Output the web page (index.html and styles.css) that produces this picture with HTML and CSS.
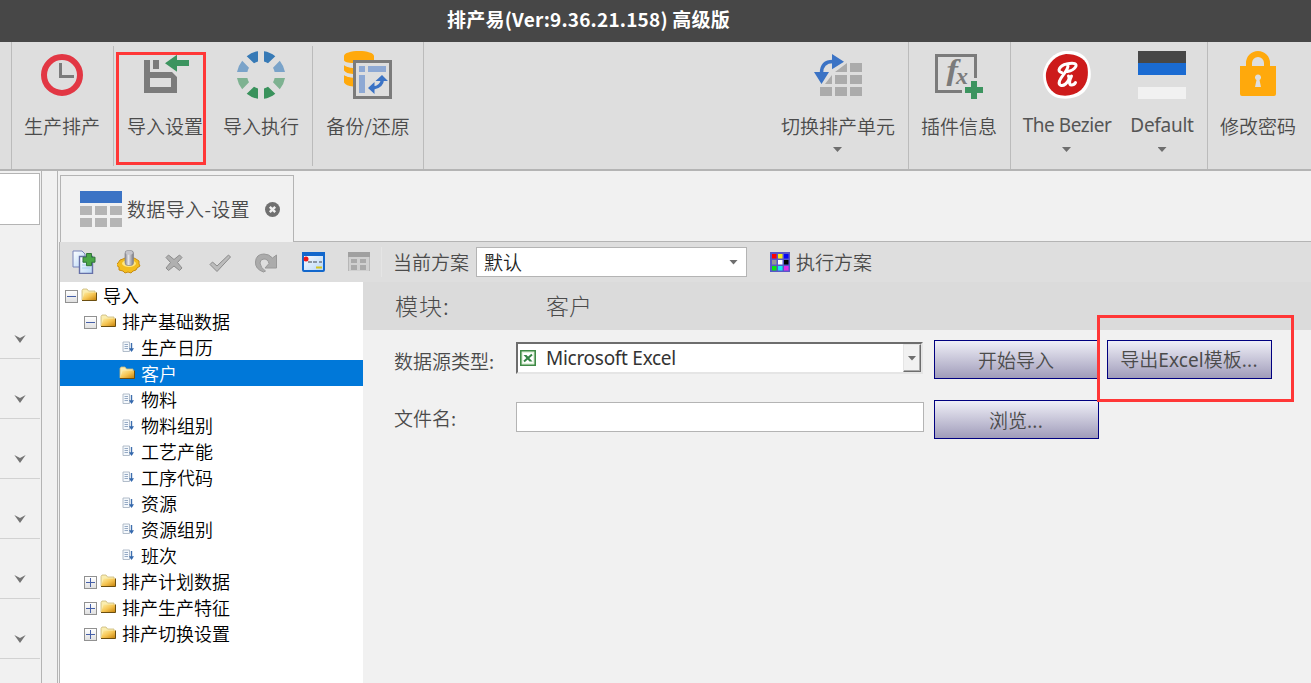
FILE: index.html
```html
<!DOCTYPE html>
<html lang="zh-CN">
<head>
<meta charset="utf-8">
<title>排产易</title>
<link rel="stylesheet" href="styles.css">
</head>
<body>
<svg class="defs" width="0" height="0" aria-hidden="true">
  <defs>
    <linearGradient id="gold" x1="0" y1="0" x2="1" y2="1"><stop offset="0" stop-color="#fff0a8"/><stop offset=".5" stop-color="#f5c452"/><stop offset="1" stop-color="#c47f08"/></linearGradient>
    <linearGradient id="sheet" x1="0" y1="0" x2="1" y2="1"><stop offset="0" stop-color="#fff"/><stop offset="1" stop-color="#b5d5f5"/></linearGradient>
    <linearGradient id="metal"><stop offset="0" stop-color="#85858d"/><stop offset=".4" stop-color="#e5e5ea"/><stop offset="1" stop-color="#77777f"/></linearGradient>
    <symbol id="folder" viewBox="0 0 16 14"><path d="M1 12V2.500L2 1h4l1.500 2H14v9z" fill="#faedb0" stroke="#c9b878" stroke-width=".8"/><path d="M1 12.500L3.500 4.500H15.500V12.500z" fill="url(#gold)"/><path d="M1 12.500H15.500V4.500" fill="none" stroke="#6b4e10" stroke-width="1"/></symbol>
    <symbol id="leaf" viewBox="0 0 12 12"><path d="M1 1h6.500v9.500H1z" fill="#f4f8fc" stroke="#a9b6c4" stroke-width=".9"/><path d="M2.500 3.500h3.500M2.500 5.500h3.500M2.500 7.500h3.500" stroke="#7d95b5" stroke-width=".8"/><path d="M9.500 2v8" stroke="#3f6fae" stroke-width="1.400"/><path d="M7 7.200h5L9.500 11z" fill="#3468ad"/></symbol>
    <symbol id="chev" viewBox="0 0 12 8"><path d="M.3 0L6 3 11.700 0 6 8z" fill="#757575"/></symbol>
  </defs>
</svg>
<div class="app">
  <header class="title">排产易(Ver:9.36.21.158) 高级版</header>
  <nav class="ribbon">
    <i class="sep lead"></i>
    <div class="item w101">
      <svg width="48" height="48"><circle cx="24" cy="24" r="18" fill="none" stroke="#e23744" stroke-width="6"/><path d="M22.500 12v13.500H36" fill="none" stroke="#7b7b7b" stroke-width="3"/></svg>
      <span>生产排产</span>
    </div>
    <i class="sep short"></i>
    <div class="item w102">
      <svg width="48" height="48"><path fill="#7b7b7b" fill-rule="evenodd" d="M3 9h6v12h22l5 5v16H3zM12 9h6v9h-6zM9 27v9h21v-9z"/><path fill="#3c945f" d="M24 12.300L36 3.700V9h12v6H36v5.700z"/></svg>
      <span>导入设置</span>
      <b class="mark mark-settings"></b>
    </div>
    <div class="item w96">
      <svg width="48" height="48"><path fill="#377ab6" d="M9.700 5.200Q15 1 21 .2V10.500Q19 11 17 12.200zM38.300 5.200Q33 1 27 .2V10.500Q29 11 31 12.200z"/><path fill="#7aa3c9" d="M0 21Q1 15 5.200 9.700L12 16.700Q10.700 19 10.400 21zM48 21Q47 15 42.800 9.700L36 16.700Q37.300 19 37.600 21z"/><path fill="#7eb291" d="M0 27Q1 33 5.200 38.300L12 31.300Q10.700 29 10.400 27zM48 27Q47 33 42.800 38.300L36 31.300Q37.300 29 37.600 27z"/><path fill="#39925c" d="M9.700 42.800Q15 47 21 47.800V37.500Q19 37 17 35.800zM38.300 42.800Q33 47 27 47.800V37.500Q29 37 31 35.800z"/></svg>
      <span>导入执行</span>
    </div>
    <i class="sep short"></i>
    <div class="item w110">
      <svg width="48" height="48"><path fill="#ffa90c" d="M0 5C0 2 7 0 15 0s15 2 15 5v7H9C4 12 0 11 0 9zM0 14q3 2.500 9 3v6Q2 22.500 0 19.500zM0 23.500q3 2.500 9 3v9Q2 35 0 31.500z"/><path d="M0 12.800q4 2.500 9 2.500M0 23q4 2.500 9 2.500" stroke="#dedede" stroke-width="2" fill="none"/><rect x="10.500" y="10.500" width="36" height="36" fill="#dedede" stroke="#7b7b7b" stroke-width="3"/><path fill="#8ea9d4" d="M15 15h6v6h-6zM24 15h18v6H24zM15 24h6v18h-6z"/><path d="M29 37q9-1 9.500-9" stroke="#3b73c5" stroke-width="3.400" fill="none"/><path fill="#3b73c5" d="M24 37l6.500-6v12zM38 24l6 6H31.500z"/></svg>
      <span>备份/还原</span>
    </div>
    <i class="sep push"></i>
    <div class="item w140">
      <svg width="48" height="48"><path fill="#ababab" d="M36 12h12v9H36zM33 12v9H21zM18 24v9h-7zM21 24h12v9H21zM36 24h12v9H36zM6 36h12v9H6zM21 36h12v9H21zM36 36h12v9H36z"/><path d="M7.500 22q0-11.500 11.500-11.500" fill="none" stroke="#3b73c5" stroke-width="3.400"/><path fill="#3b73c5" d="M18 3l12 7.700-12 7.600zM0 21h15L7.500 33z"/></svg>
      <span>切换排产单元</span><em class="drop"></em>
    </div>
    <i class="sep"></i>
    <div class="item w101">
      <svg class="open" width="48" height="48"><path d="M27 40.500H1.500v-36h39V27" fill="none" stroke="#7b7b7b" stroke-width="3"/><text transform="translate(11.500 28.500) scale(1.150 1)" class="fx-f">f</text><text x="21" y="32.500" class="fx-x">x</text><path fill="#3c945f" d="M36 30h6v6h6v6h-6v6h-6v-6h-6v-6h6z"/></svg>
      <span>插件信息</span>
    </div>
    <i class="sep"></i>
    <div class="item w112">
      <svg width="48" height="48"><path fill="#fff" d="M22 0C35-1 43 4 46 13c4 12 1 22-6 29-7 6-19 7-28 4C4 42 0 33 0 24 1 11 11 1 22 0z"/><path fill="#cd1b1b" d="M23 3C34 3 41 7 44 14c2 9 1 18-6 25-7 6-17 7-25 4C6 39 2 31 3 22 5 11 14 4 23 3z"/><path d="M18.500 21.500c-5-1-2-7 5-8.500 8-2 11 0 9 3-1.500 2.500-5 4-8 4.500M25 15c-1 6-6 9-8.500 15-1.500 5 3 5.500 6 3 3-2.500 4.500-6 3-8M28.500 25c-2 4-3 9 0 9 1.500 0 3-.5 4-2.500" fill="none" stroke="#fff" stroke-width="3" stroke-linecap="round" stroke-linejoin="round"/></svg>
      <span class="latin wide">The Bezier</span><em class="drop"></em>
    </div>
    <div class="item w79">
      <svg width="48" height="48"><path fill="#474747" d="M0 0h48v12H0z"/><path fill="#1a6bd2" d="M0 12h48v12H0z"/><path fill="#f1f1f1" d="M0 36h48v12H0z"/></svg>
      <span class="latin">Default</span><em class="drop"></em>
    </div>
    <i class="sep gap"></i>
    <div class="item w101">
      <svg width="48" height="48"><path fill="#ffa90c" fill-rule="evenodd" d="M6 15h6v-3a12 12 0 0 1 24 0v3h6v28q0 2-2 2H8q-2 0-2-2zM18 15h12v-3a6 6 0 0 0-12 0zM22.500 29L21 36h6l-1.500-7a3 3 0 1 0-3 0z"/></svg>
      <span>修改密码</span>
    </div>
  </nav>
  <div class="body">
    <aside class="side">
      <div class="side-box"></div>
      <div class="side-row first"><svg width="12" height="8"><use href="#chev"/></svg></div>
      <div class="side-row"><svg width="12" height="8"><use href="#chev"/></svg></div>
      <div class="side-row"><svg width="12" height="8"><use href="#chev"/></svg></div>
      <div class="side-row"><svg width="12" height="8"><use href="#chev"/></svg></div>
      <div class="side-row"><svg width="12" height="8"><use href="#chev"/></svg></div>
      <div class="side-row"><svg width="12" height="8"><use href="#chev"/></svg></div>
    </aside>
    <div class="splitter"></div>
    <main class="main">
      <div class="tabs">
        <div class="tab">
          <svg width="42" height="36"><path fill="#3b73c5" d="M0 0h42v12H0z"/><path fill="#b5b5b5" d="M0 15h12v9H0zM15 15h12v9H15zM30 15h12v9H30zM0 27h12v9H0zM15 27h12v9H15zM30 27h12v9H30z"/></svg>
          <span>数据导入-设置</span>
          <svg class="close" width="15" height="15"><circle cx="7.500" cy="7.500" r="7.500" fill="#707070"/><path d="M4.800 4.800l5.400 5.400M10.200 4.800l-5.400 5.400" stroke="#f1f1f1" stroke-width="2.400"/></svg>
        </div>
        <div class="tab-rest"></div>
      </div>
      <div class="panel">
        <div class="toolbar">
          <div class="tools">
            <svg width="24" height="24"><path d="M1 1h9l3 3v13H1z" fill="url(#sheet)" stroke="#7683b8"/><path d="M7.500 6.500h13v17h-13z" fill="url(#sheet)" stroke="#6670a8" stroke-width="1.400"/><path d="M10 12h8M10 15h8M10 18h8" stroke="#a6cdf0"/><path d="M14.500 3.500h5v3.700h3.500v5h-3.500v3.500h-5v-3.500H11v-5h3.500z" fill="#4aa747" stroke="#32763a"/></svg>
            <svg width="24" height="24"><path d="M3 10l3-1 2-1 9 0 2 1 3 2 0 3 1 2-3 2-1 2-3 1-2 2-3-1-3 1-2-2-4-1 0-3-3-2 2-2z" fill="#f3bd1e" stroke="#c98c10"/><ellipse cx="12" cy="13.500" rx="7" ry="3.500" fill="#ffe680"/><rect x="8" y=".5" width="8.500" height="15" rx="3" fill="url(#metal)" stroke="#85858c" stroke-width=".7"/><ellipse cx="12.200" cy="2.700" rx="3.600" ry="2" fill="#c5c5cb"/></svg>
            <svg width="24" height="24"><path d="M6.500 5l5.500 4.500L17.500 5l2.500 2.500-4.500 5 4.500 5.500-2.500 2.500-5.500-4.500L6.500 20.500 4 18l4.500-5.500-4.500-5z" fill="#b0b0b0" stroke="#8d8d8d"/></svg>
            <svg width="24" height="24"><path d="M2 14.500L4.500 12l4.500 4L20.500 5l2 2L9 21.500z" fill="#bcbcbc" stroke="#8b8b8b"/></svg>
            <svg width="24" height="24"><path d="M9.500 22Q1 19 1.500 12 2 4 10 4q5 0 8.500 4l4-3v13H11l4-4.500q-1-4.500-5-4.500-4 0-4 4 .5 5 5.500 8z" fill="#ababab" stroke="#989898"/></svg>
            <svg width="24" height="24"><rect x="2" y="3" width="21" height="18" rx="1" fill="url(#sheet)" stroke="#1267cc" stroke-width="2"/><path d="M1 2h23v4H1z" fill="#1267cc"/><circle cx="5" cy="9" r="2.500" fill="#ee1717"/><path d="M7 12h4M12 12h4M18 12h3" stroke="#707b88" stroke-width="1.500"/><path d="M15 16.500h6v2h-6z" fill="#d5c51d"/></svg>
            <svg width="24" height="24"><path d="M1 2h22v5H1z" fill="#a0a0a0"/><path d="M2 7h20v14H2z" fill="#d0d0d0"/><path d="M1.500 7v14M22.500 7v14" stroke="#b7b7b7"/><path d="M4 9h6v4H4zM13 9h6v4h-6zM4 15h6v5H4zM13 15h6v5h-6z" fill="#aaa"/></svg>
          </div>
          <span class="plan-label">当前方案</span>
          <div class="select"><span>默认</span><em class="drop"></em></div>
          <svg class="palette" width="20" height="20"><path fill="#5757c9" d="M0 0h20v20H0z"/><path fill="red" d="M2 2h4.500v4.500H2z"/><path fill="#f4ef17" d="M8 2h4.500v4.500H8z"/><path fill="#0808f0" d="M14 2h4.500v4.500H14z"/><path fill="#969696" d="M2 8h4.500v4.500H2z"/><path fill="#fff" d="M8 8h4.500v4.500H8z"/><path d="M14 8h4.500v4.500H14z"/><path fill="#0be60b" d="M2 14h4.500v4.500H2z"/><path fill="#15e6f2" d="M8 14h4.500v4.500H8z"/><path fill="#e52be9" d="M14 14h4.500v4.500H14z"/></svg>
          <span>执行方案</span>
        </div>
        <div class="work">
          <div class="tree">
            <div class="row"><i class="box"></i><svg width="16" height="14"><use href="#folder"/></svg>导入</div>
            <div class="row l1"><i class="box"></i><svg width="16" height="14"><use href="#folder"/></svg>排产基础数据</div>
            <div class="row l2"><svg width="12" height="12"><use href="#leaf"/></svg>生产日历</div>
            <div class="row l2 on"><svg width="16" height="14"><use href="#folder"/></svg>客户</div>
            <div class="row l2"><svg width="12" height="12"><use href="#leaf"/></svg>物料</div>
            <div class="row l2"><svg width="12" height="12"><use href="#leaf"/></svg>物料组别</div>
            <div class="row l2"><svg width="12" height="12"><use href="#leaf"/></svg>工艺产能</div>
            <div class="row l2"><svg width="12" height="12"><use href="#leaf"/></svg>工序代码</div>
            <div class="row l2"><svg width="12" height="12"><use href="#leaf"/></svg>资源</div>
            <div class="row l2"><svg width="12" height="12"><use href="#leaf"/></svg>资源组别</div>
            <div class="row l2"><svg width="12" height="12"><use href="#leaf"/></svg>班次</div>
            <div class="row l1"><i class="box plus"></i><svg width="16" height="14"><use href="#folder"/></svg>排产计划数据</div>
            <div class="row l1"><i class="box plus"></i><svg width="16" height="14"><use href="#folder"/></svg>排产生产特征</div>
            <div class="row l1"><i class="box plus"></i><svg width="16" height="14"><use href="#folder"/></svg>排产切换设置</div>
          </div>
          <section class="detail">
            <div class="module"><span class="module-key">模块:</span><span>客户</span></div>
            <div class="form">
              <label class="key">数据源类型:</label>
              <div class="combo">
                <svg width="16" height="16"><path fill="#e3f2dd" stroke="#3f8a46" stroke-width="1.600" d="M.8.800h14.400v14.400H.8z"/><path fill="#fff" d="M3 3h10v10H3z"/><path d="M3.500 5h3l6 6.500h-3z" fill="#348344"/><path d="M12 4.500L4 11.500" stroke="#348344" stroke-width="2"/></svg>
                <span class="latin">Microsoft Excel</span>
                <i class="combo-btn"><em class="drop"></em></i>
              </div>
              <div class="btn">开始导入</div>
              <div class="btn export"><span>导出<span class="excel">Excel</span>模板<span class="dots">...</span></span><b class="mark mark-export"></b></div>
              <label class="key file-key">文件名:</label>
              <div class="field"></div>
              <div class="btn">浏览<span class="dots">...</span></div>
            </div>
          </section>
        </div>
      </div>
    </main>
  </div>
</div>
</body>
</html>
```

FILE: styles.css
```css
* { box-sizing: border-box; }
body { margin: 0; overflow: hidden; }
.defs { position: absolute; }
.app {
  width: 1311px; height: 683px; display: flex; flex-direction: column; overflow: hidden;
  background: #f1f1f1; color: #4b4b4b;
  font: 350 19px/24px "Noto Sans CJK SC", sans-serif; white-space: nowrap;
}
svg { display: block; flex: none; }
svg.open { overflow: visible; }
i, em { font-style: normal; display: block; flex: none; }
.latin { font-family: "Noto Sans", "Noto Sans CJK SC", sans-serif; font-weight: 400; letter-spacing: -.28px; color: #555; }
.latin.wide { letter-spacing: -.45px; }
.title {
  height: 42px; flex: none; background: #474747; color: #fff; font-weight: 700; font-size: 19px; letter-spacing: .2px;
  line-height: 38px; text-align: center; padding-right: 134px;
}
.ribbon { height: 129px; flex: none; display: flex; background: #dedede; border-bottom: 2px solid #b4b4b4; }
.sep { width: 1px; background: #bbb; }
.sep.lead { margin-left: 11px; }
.sep.short { margin: 4px 0 3px; }
.sep.push { margin-right: auto; }
.sep.gap { margin-left: 5px; }
.item { position: relative; flex: none; display: flex; flex-direction: column; align-items: center; padding-top: 9px; }
.item > span { margin-top: 15px; height: 24px; }
.item > .latin { margin-top: 14px; height: 25px; }
.w101 { width: 101px; padding-right: 1px; }
.w102 { width: 102px; }
.w96 { width: 96px; padding-right: 6px; }
.w110 { width: 110px; }
.w140 { width: 140px; }
.w112 { width: 112px; }
.w79 { width: 79px; padding-right: 1px; }
.item:last-child { margin-right: 2px; }
.drop { width: 9px; height: 5px; background: #6e6e6e; clip-path: polygon(0 0, 100% 0, 50% 100%); }
.item .drop { margin-top: 9px; margin-right: 1px; }
.w79 .drop { margin-right: 0; }
.fx-f { font: italic 700 30px "Liberation Serif", serif; fill: #7b7b7b; }
.fx-x { font: italic 700 24px "Liberation Serif", serif; fill: #7b7b7b; }
.mark { position: absolute; border: 3px solid #ff3737; z-index: 2; }
.mark-settings { left: 2px; top: 10px; width: 90px; height: 113px; }
.mark-export { left: -11px; top: -26px; width: 197px; height: 87px; }
.body { flex: 1; display: flex; min-height: 0; }
.side { width: 42px; flex: none; border-right: 1px solid #b4b4b4; padding-top: 2px; }
.side-box { width: 40px; height: 52px; background: #fff; border: 1px solid #b4b4b4; border-left: 0; }
.side-row { width: 40px; height: 60px; border-bottom: 1px solid #d2d2d2; padding: 36px 0 0 14px; }
.side-row.first { height: 134px; padding-top: 110px; }
.splitter { width: 16px; flex: none; border-right: 1px solid #b4b4b4; }
.main { flex: 1; display: flex; flex-direction: column; min-width: 0; padding: 4px 0 0 1px; }
.tabs { display: flex; height: 67px; flex: none; }
.tab { margin-left: 1px; width: 234px; flex: none; display: flex; align-items: center; padding: 0 0 0 19px; border: 1px solid #b4b4b4; border-bottom: 0; }
.tab > span { margin-left: 5px; width: 123px; letter-spacing: .35px; }
.close { margin-left: 15px; }
.tab-rest { flex: 1; margin-top: 66px; background: #b4b4b4; height: 1px; }
.panel { flex: 1; display: flex; flex-direction: column; border-left: 1px solid #b4b4b4; min-height: 0; }
.toolbar { height: 40px; flex: none; display: flex; align-items: center; background: #dedede; padding: 0 0 0 12px; }
.tools { display: flex; gap: 22px; width: 310px; height: 30px; align-items: center; border-right: 1px solid #e5e5e5; }
.tools svg:nth-child(2), .tools svg:nth-child(3) { margin-left: -1px; }
.tools svg:nth-child(6) { margin-left: 1px; }
.plan-label { margin-left: 11px; width: 76px; }
.select { margin-left: 7px; width: 271px; height: 30px; background: #fff; border: 1px solid #b4b4b4; display: flex; align-items: center; justify-content: space-between; padding: 0 8px 0 7px; color: #222; }
.palette { margin: 0 6px 0 23px; }
.work { flex: 1; display: flex; min-height: 0; }
.tree { width: 303px; flex: none; background: #fff; color: #000; font-size: 18px; line-height: 24px; }
.row { height: 26px; display: flex; align-items: center; padding: 0 0 0 5px; }
.row svg { margin: 0 6px 0 -1px; }
.row.l1 { padding-left: 24px; }
.row.l2 { padding-left: 62px; }
.row.l2 svg { margin: 0 7px 0 0; }
.row.on { background: #0078d9; color: #fff; padding-left: 59px; }
.row.on svg { margin-right: 6px; }
.box { width: 13px; height: 13px; margin: 3px 4px 0 0; border: 1px solid #919191; background: linear-gradient(#4660a8, #4660a8) center / 9px 1px no-repeat, linear-gradient(#fff, #e0e0e0); }
.box.plus { background: linear-gradient(#4660a8, #4660a8) center / 9px 1px no-repeat, linear-gradient(#4660a8, #4660a8) center / 1px 9px no-repeat, linear-gradient(#fff, #e0e0e0); }
.detail { flex: 1; min-width: 0; }
.module { height: 48px; background: #dbdbdb; font-size: 23px; font-weight: 300; line-height: 46px; display: flex; padding-left: 32px; }
.module-key { width: 151px; letter-spacing: 1px; }
.form { display: grid; grid-template-columns: 122px 408px 165px 165px; grid-template-rows: 39px 39px; row-gap: 21px; padding: 10px 0 0 31px; }
.form > :nth-child(3), .form > :nth-child(7) { margin-left: 10px; }
.export { margin-left: 18px; }
.key { line-height: 39px; padding-top: 1px; }
.file-key { line-height: 33px; }
.key + .field { margin-top: 2px; height: 30px; background: #fff; border: 1px solid #b4b4b4; }
.combo { margin-top: 2px; height: 32px; width: 407px; background: #fff; border: 2px solid; border-color: #6d6d6d #e5e5e5 #e5e5e5 #6d6d6d; display: flex; align-items: center; padding-left: 2px; }
.combo .latin { margin-left: 10px; flex: 1; color: #333; }
.combo-btn { width: 18px; height: 28px; background: #f1f1f1; border: 1px solid; border-color: #e5e5e5 #6d6d6d #6d6d6d #e5e5e5; box-shadow: inset -1px -1px #aaa; display: flex; align-items: center; justify-content: center; }
.btn { position: relative; width: 165px; height: 39px; border: 1px solid #000080; background: linear-gradient(#efeff7, #a09cba); display: flex; align-items: center; justify-content: center; padding-right: 1px; }
.excel { font-family: "Noto Sans", sans-serif; font-weight: 400; letter-spacing: .1px; }
.dots { letter-spacing: .2px; }
```
